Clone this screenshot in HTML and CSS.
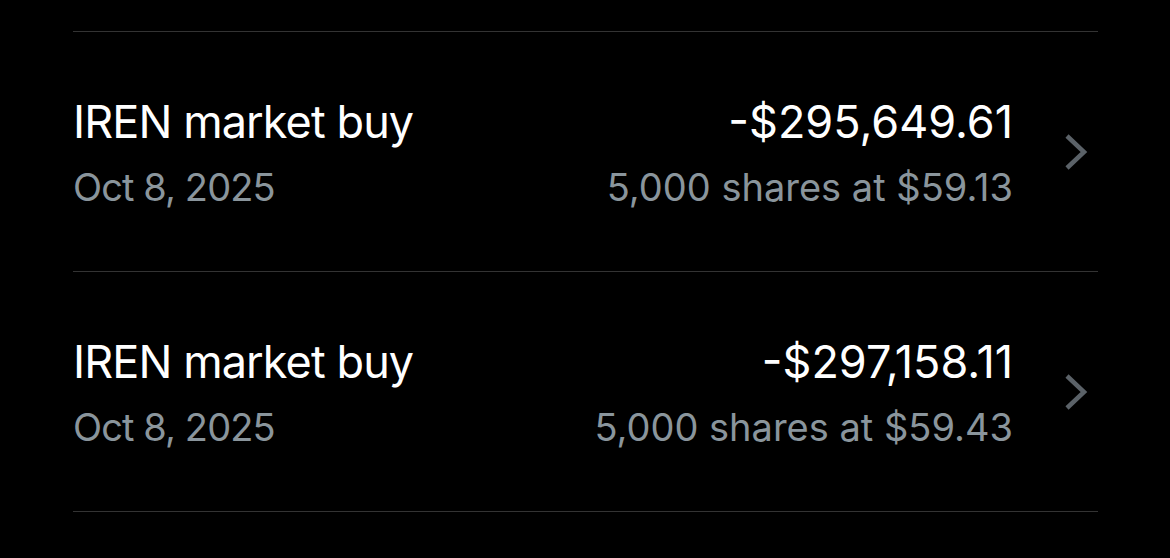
FILE: index.html
```html
<!DOCTYPE html>
<html lang="en">
<head>
    <link rel="stylesheet" href="styles.css">
</head>
<body>
    <ul class="orders">
        <li class="order">
            <div class="order-info">
                <div class="order-title">IREN market buy</div>
                <div class="order-date">Oct 8, 2025</div>
            </div>
            <div class="order-amount">
                <div class="order-total">-$295,649.61</div>
                <div class="order-shares">5,000 shares at $59.13</div>
            </div>
            <svg class="chevron" width="24" height="38" viewBox="0 0 24 38">
                <polyline points="3,3 20,19 3,35" />
            </svg>
        </li>
        <li class="order">
            <div class="order-info">
                <div class="order-title">IREN market buy</div>
                <div class="order-date">Oct 8, 2025</div>
            </div>
            <div class="order-amount">
                <div class="order-total">-$297,158.11</div>
                <div class="order-shares">5,000 shares at $59.43</div>
            </div>
            <svg class="chevron" width="24" height="38" viewBox="0 0 24 38">
                <polyline points="3,3 20,19 3,35" />
            </svg>
        </li>
    </ul>
</body>
</html>
```

FILE: styles.css
```css
body {
    margin: 0;
    background-color: #000;
    font-family: Inter, "Liberation Sans", sans-serif;
}

.orders {
    list-style: none;
    margin: 0;
    padding: 31px 72px 0 73px;
}

.order {
    display: flex;
    align-items: center;
    height: 239px;
    border-top: 1px solid #333;
}

.order:last-child {
    border-bottom: 1px solid #333;
}

.order-info {
    flex: 1;
}

.order-title,
.order-total {
    color: #fff;
    font-size: 45px;
    line-height: 71px;
}

.order-title {
    letter-spacing: -0.9px;
}

.order-date,
.order-shares {
    color: #8a959c;
    font-size: 38px;
    line-height: 60px;
}

.order-date {
    letter-spacing: -0.9px;
}

.order-amount {
    text-align: right;
}

.chevron {
    margin-left: 51px;
    margin-right: 10px;
}

.chevron polyline {
    fill: none;
    stroke: #5b6268;
    stroke-width: 4.5;
}
```
